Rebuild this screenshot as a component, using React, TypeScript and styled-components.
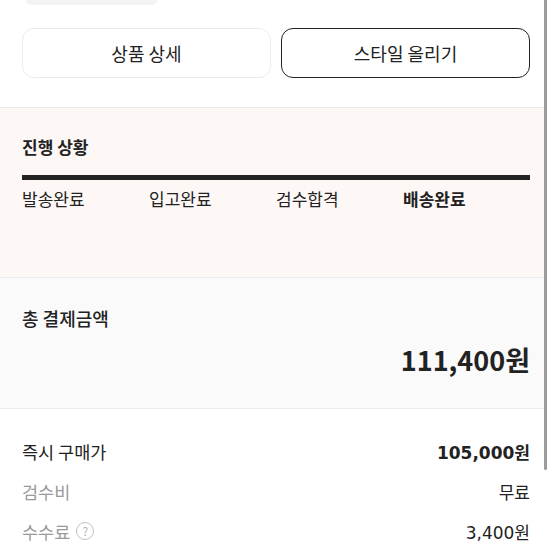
import React from "react";
import styled, { createGlobalStyle } from "styled-components";

const Global = createGlobalStyle`
  html, body { margin: 0; padding: 0; background: #fff; }
  body { font-family: "Noto Sans CJK KR", "Noto Sans", sans-serif; color: #222; overflow: hidden; }
`;

const Page = styled.div`
  position: relative;
  width: 553px;
  height: 553px;
  overflow: hidden;
  background: #fff;
`;

const Content = styled.div`
  width: 545px;
  display: flex;
  flex-direction: column;
`;

const TopStub = styled.div`
  margin-left: 26px;
  width: 131px;
  height: 5px;
  background: #f3f3f3;
  border-radius: 0 0 8px 8px;
`;

const ButtonRow = styled.div`
  display: grid;
  grid-template-columns: 1fr 1fr;
  gap: 10px;
  padding: 23px 15px 29px 22px;
  border-bottom: 1px solid #ebebeb;
`;

const Button = styled.button<{ $dark?: boolean }>`
  height: 50px;
  border-radius: 12px;
  background: #fff;
  border: 1px solid ${(p) => (p.$dark ? "#222" : "#ebebeb")};
  font-family: inherit;
  font-size: 18px;
  color: #222;
  padding: 0;
`;

const Section = styled.section<{ $bg: string }>`
  background: ${(p) => p.$bg};
  border-bottom: 1px solid #ebebeb;
`;

const ProgressSection = styled(Section)`
  height: 170px;
  padding: 27px 15px 0 22px;
  box-sizing: border-box;
`;

const Title = styled.div<{ $bold?: boolean; $size?: number }>`
  font-size: ${(p) => p.$size ?? 17}px;
  font-weight: ${(p) => (p.$bold ? 700 : 500)};
  line-height: 24px;
  color: #222;
`;

const Bar = styled.div`
  margin-top: 16px;
  height: 5px;
  background: #222;
`;

const Steps = styled.div`
  display: grid;
  grid-template-columns: repeat(4, 1fr);
  margin-top: 7px;
`;

const Step = styled.div<{ $active?: boolean }>`
  font-size: 17px;
  line-height: 24px;
  font-weight: ${(p) => (p.$active ? 700 : 400)};
  color: #222;
`;

const TotalSection = styled(Section)`
  height: 131px;
  padding: 28px 15px 0 22px;
  box-sizing: border-box;
  display: flex;
  flex-direction: column;
`;

const Total = styled.div`
  align-self: flex-end;
  margin-top: 12px;
  font-size: 27px;
  font-weight: 700;
  line-height: 36px;
  color: #222;
`;

const Rows = styled.div`
  display: flex;
  flex-direction: column;
  gap: 16px;
  padding: 30px 15px 0 22px;
`;

const Row = styled.div`
  display: flex;
  justify-content: space-between;
  align-items: center;
  height: 24px;
`;

const Label = styled.span<{ $muted?: boolean }>`
  display: inline-flex;
  align-items: center;
  gap: 6px;
  font-size: 17.5px;
  color: ${(p) => (p.$muted ? "#9b9b9b" : "#222")};
`;

const Value = styled.span<{ $bold?: boolean }>`
  font-family: "DejaVu Sans", "Noto Sans CJK KR", sans-serif;
  font-size: 17px;
  font-weight: ${(p) => (p.$bold ? 700 : 400)};
  color: #222;
`;

const Help = styled.span`
  display: inline-flex;
  align-items: center;
  justify-content: center;
  width: 18px;
  height: 18px;
  border-radius: 50%;
  border: 1.3px solid #c2c2c2;
  box-sizing: border-box;
  font-size: 12px;
  color: #b5b5b5;
  line-height: 1;
`;

const ScrollThumb = styled.div`
  position: absolute;
  left: 544px;
  top: -10px;
  width: 3px;
  height: 480px;
  background: #9c9c9c;
  border-radius: 2px;
`;

export default function App() {
  return (
    <Page>
      <Global />
      <Content>
        <TopStub />
        <ButtonRow>
          <Button>상품 상세</Button>
          <Button $dark>스타일 올리기</Button>
        </ButtonRow>
        <ProgressSection $bg="#fdf7f6">
          <Title $bold>진행 상황</Title>
          <Bar />
          <Steps>
            <Step>발송완료</Step>
            <Step>입고완료</Step>
            <Step>검수합격</Step>
            <Step $active>배송완료</Step>
          </Steps>
        </ProgressSection>
        <TotalSection $bg="#fafafa">
          <Title $size={18}>총 결제금액</Title>
          <Total>111,400원</Total>
        </TotalSection>
        <Rows>
          <Row>
            <Label>즉시 구매가</Label>
            <Value $bold>105,000원</Value>
          </Row>
          <Row>
            <Label $muted>검수비</Label>
            <Value>무료</Value>
          </Row>
          <Row>
            <Label $muted>
              수수료<Help>?</Help>
            </Label>
            <Value>3,400원</Value>
          </Row>
        </Rows>
      </Content>
      <ScrollThumb />
    </Page>
  );
}
